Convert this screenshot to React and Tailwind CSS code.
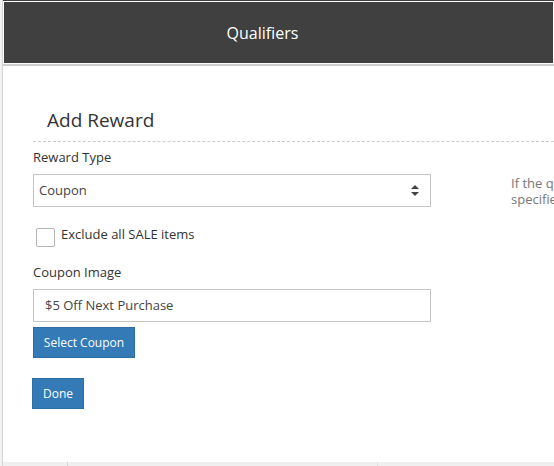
import React from "react";

export default function App() {
  return (
    <div
      className="w-[554px] h-[466px] overflow-hidden bg-white flex flex-row relative"
      style={{ fontFamily: '"Open Sans", "Liberation Sans", sans-serif' }}
    >
      {/* left strip */}
      <div className="w-[3px] shrink-0 bg-[#f2f2f2] border-r border-[#d6d6d6]" />
      <div className="flex-1 flex flex-col min-w-0">
        {/* header */}
        <div className="border-t border-[#404040] shrink-0">
          <div className="h-[63px] bg-[#404040] border border-white flex items-center justify-center pr-[32px]">
            <span className="text-white text-[16px] leading-[20px]">Qualifiers</span>
          </div>
        </div>
        <div className="h-[2px] bg-[#cfcfcf] shrink-0" />

        {/* body */}
        <div className="flex-1 flex flex-col pl-[30px] text-[#333]">
          <div className="mt-[40px] pl-[14px] pb-[7px] border-b border-dashed border-[#cccccc] text-[19px] leading-[28px]">
            Add Reward
          </div>

          <div className="flex flex-row">
            <div className="w-[398px] shrink-0 flex flex-col">
              <div className="mt-[6px] text-[13px] leading-[18px]">Reward Type</div>
              <div className="mt-[8px] h-[33px] border border-[#c4c4c4] flex items-center justify-between pl-[5px] pr-[11px] text-[13px] text-[#444]">
                <span>Coupon</span>
                <svg width="8" height="11" viewBox="0 0 8 11">
                  <path d="M4 0 L8 4 L0 4 Z" fill="#444" />
                  <path d="M0 7 L8 7 L4 11 Z" fill="#444" />
                </svg>
              </div>

              <div className="mt-[17px] flex flex-row items-start">
                <div className="mt-[4px] ml-[3px] w-[19px] h-[19px] border border-[#b5b5b5] rounded-[2px] bg-white" />
                <span className="ml-[6px] mt-[1px] text-[13px] leading-[18px]">Exclude all SALE items</span>
              </div>

              <div className="mt-[16px] text-[13px] leading-[18px]">Coupon Image</div>
              <div className="mt-[8px] h-[33px] border border-[#c4c4c4] flex items-center pl-[11px] text-[13px] text-[#444]">
                $5 Off Next Purchase
              </div>
              <div className="mt-[5px]">
                <button className="h-[31px] w-[102px] bg-[#337ab7] border border-[#2e6da4] text-white text-[12px] leading-[16px]">
                  Select Coupon
                </button>
              </div>
              <div className="mt-[20px] -ml-px">
                <button className="h-[31px] w-[52px] bg-[#337ab7] border border-[#2e6da4] text-white text-[12px] leading-[16px]">
                  Done
                </button>
              </div>
            </div>
            <div className="ml-[80px] flex-1 min-w-0 overflow-hidden pt-[33px] text-[13px] leading-[16px] text-[#777] whitespace-nowrap">
              <div>If the qualifiers are met, the customer will receive the</div>
              <div>specified reward.</div>
            </div>
          </div>
        </div>

        {/* bottom strip */}
        <div className="h-[4px] bg-[#f0f0f0] flex flex-row shrink-0">
          <div className="w-[65px] border-r border-[#d6d6d6]" />
          <div className="w-[310px] border-r border-[#e0e0e0]" />
        </div>
      </div>
    </div>
  );
}
